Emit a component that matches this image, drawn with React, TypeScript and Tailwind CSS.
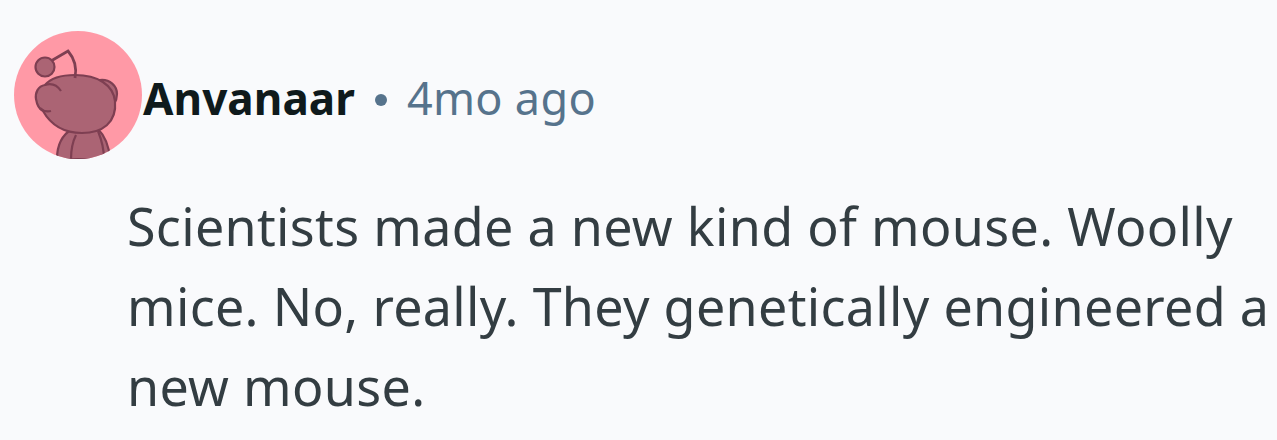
import React from 'react';

function Avatar() {
  return (
    <svg width="128" height="128" viewBox="0 0 128 128" className="shrink-0">
      <defs>
        <clipPath id="round">
          <circle cx="64" cy="64" r="64" />
        </clipPath>
      </defs>
      <circle cx="64" cy="64" r="64" fill="#ff99a6" />
      <g clipPath="url(#round)" stroke="#7e3f52" strokeWidth="2.2" fill="#ab6474">
        <path d="M43 128 C43 114 48 104 58 98 L84 98 C90 104 95 114 96 128 Z" />
        <path d="M57 128 C57 118 59 110 62 104" fill="none" />
        <path d="M84 100 C88 110 90 118 90 128" fill="none" />
        <path d="M86 49 C96 48 103 55 103 63 C103 67 102 70 100 73 Z" />
        <path d="M61 44 C46 44 36 48 31 54 C24 55 21 62 22 68 C23 74 25 78 29 80 C37 94 50 102 68 102 C88 102 103 92 101 70 C99 54 84 44 61 44 Z" />
        <path d="M31 54 C37 52 43 54 47 60" fill="none" />
        <path d="M26 77 C29 80 33 81 37 80" fill="none" />
        <path d="M37 30 L54 20 C60 27 63 37 61 47" fill="none" strokeWidth="2.8" />
        <circle cx="31" cy="36" r="9.5" />
      </g>
    </svg>
  );
}

export default function App() {
  return (
    <div className="w-[1277px] h-[440px] overflow-hidden bg-[#f9fafc] font-['Noto_Sans','Open_Sans',sans-serif]">
      <div className="flex items-center pt-[31px] pl-[14px]">
        <Avatar />
        <div className="flex items-center text-[44px] leading-[56px] mt-[6px] ml-[1px]">
          <span className="font-bold text-[#0f1a1c] tracking-[0.05px]">Anvanaar</span>
          <span className="w-[12px] h-[12px] rounded-full bg-[#56738c] mx-[20px] mt-[4px]" />
          <span className="text-[45px] text-[#56738c] tracking-[0.3px]">4mo ago</span>
        </div>
      </div>
      <p className="ml-[127px] mt-[27px] w-[1150px] text-[52px] leading-[80px] tracking-[0.32px] text-[#333d42]">
        Scientists made a new kind of mouse. Woolly mice. No, really. They genetically engineered a new mouse.
      </p>
    </div>
  );
}
